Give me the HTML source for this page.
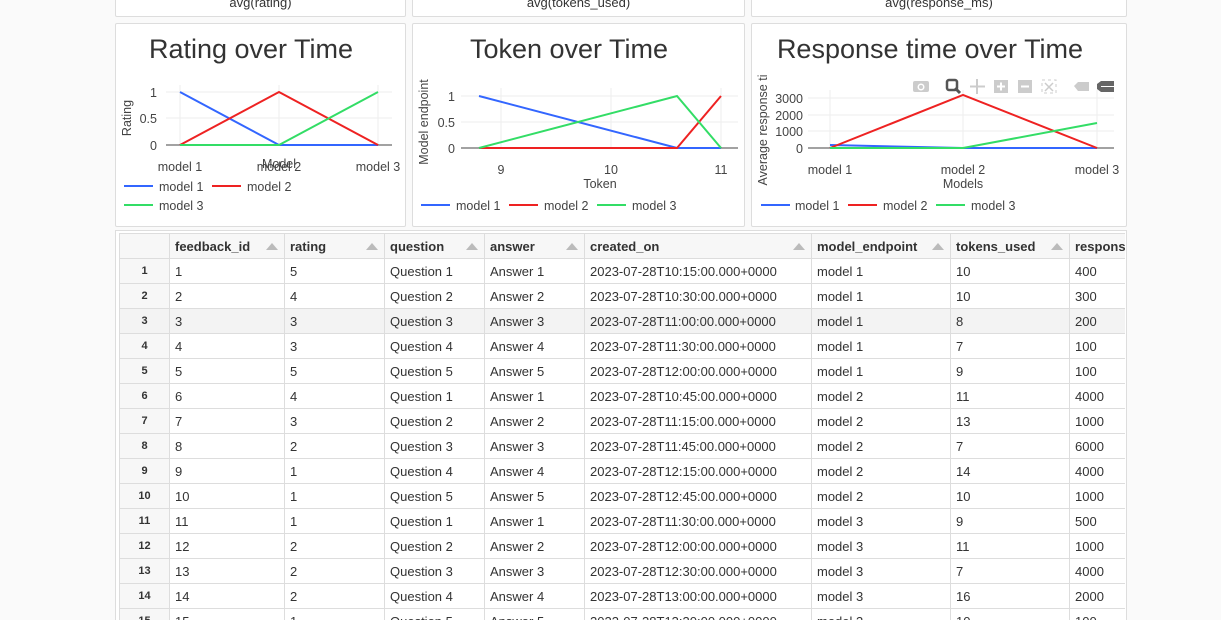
<!DOCTYPE html>
<html><head><meta charset="utf-8"><style>
html,body{margin:0;width:1221px;height:620px;overflow:hidden}
body{background:#fafafa;font-family:"Liberation Sans",sans-serif;position:relative}
.card{position:absolute;background:#fff;border:1px solid #ddd;border-radius:2px;box-sizing:border-box}
.tbl{position:absolute;left:115px;top:230px;width:1012px;height:400px;background:#fff;border:1px solid #ddd;box-sizing:border-box}
.wrap{position:absolute;left:119px;top:233px;width:1006px;height:387px;overflow:hidden}
table{border-collapse:collapse;table-layout:fixed;font-size:13px;color:#333;width:1020px}
td,th{border:1px solid #ddd;height:25px;box-sizing:border-box;padding:0 5px;white-space:nowrap;overflow:hidden;text-align:left}
th{font-weight:bold;background:#f7f7f7;position:relative}
th .ar{position:absolute;right:6px;top:9px;width:0;height:0;border-left:6px solid transparent;border-right:6px solid transparent;border-bottom:7px solid #bbb}
td.n{text-align:center;font-weight:bold;font-size:11px;background:#f7f7f7}
tr.h td{background:#f3f3f3}
.tt{position:absolute;left:0;right:0;top:-1px;text-align:center;font-size:13px;color:#333}
</style></head><body>
<div class="card" style="left:115px;top:-5px;width:291px;height:22px"><div class="tt">avg(rating)</div></div>
<div class="card" style="left:412px;top:-5px;width:333px;height:22px"><div class="tt">avg(tokens_used)</div></div>
<div class="card" style="left:751px;top:-5px;width:376px;height:22px"><div class="tt">avg(response_ms)</div></div>

<div class="card" style="left:115px;top:23px;width:291px;height:204px"></div>
<div class="card" style="left:412px;top:23px;width:333px;height:204px"></div>
<div class="card" style="left:751px;top:23px;width:376px;height:204px"></div>

<svg width="1221" height="230" style="position:absolute;left:0;top:0" font-size="12.5" fill="#444" font-family="Liberation Sans, sans-serif">
<text x="251" y="58" font-size="27" fill="#333" text-anchor="middle">Rating over Time</text>
<g stroke="#eee"><line x1="166" y1="92" x2="392" y2="92"/><line x1="166" y1="118" x2="392" y2="118"/><line x1="180" y1="85" x2="180" y2="145"/><line x1="279" y1="85" x2="279" y2="145"/><line x1="378" y1="85" x2="378" y2="145"/></g>
<line x1="166" y1="145" x2="392" y2="145" stroke="#444"/>
<text x="157" y="97" text-anchor="end">1</text><text x="157" y="123" text-anchor="end">0.5</text><text x="157" y="150" text-anchor="end">0</text>
<text transform="translate(131,118) rotate(-90)" text-anchor="middle">Rating</text>
<g fill="none" stroke-width="2"><polyline points="180,92 279,145 378,145" stroke="#3366ff"/><polyline points="180,145 279,92 378,145" stroke="#ee2222"/><polyline points="180,145 279,145 378,92" stroke="#33dd66"/></g>
<text x="180" y="171" text-anchor="middle">model 1</text><text x="279" y="171" text-anchor="middle">model 2</text><text x="378" y="171" text-anchor="middle">model 3</text>
<text x="279" y="168" text-anchor="middle">Model</text>
<g stroke-width="2"><line x1="124" y1="186" x2="153" y2="186" stroke="#3366ff"/><line x1="212" y1="186" x2="241" y2="186" stroke="#ee2222"/><line x1="124" y1="205" x2="153" y2="205" stroke="#33dd66"/></g>
<text x="159" y="191">model 1</text><text x="247" y="191">model 2</text><text x="159" y="210">model 3</text>
<text x="569" y="58" font-size="27" fill="#333" text-anchor="middle">Token over Time</text>
<g stroke="#eee"><line x1="461" y1="96" x2="738" y2="96"/><line x1="461" y1="122" x2="738" y2="122"/><line x1="501" y1="88" x2="501" y2="148"/><line x1="611" y1="88" x2="611" y2="148"/><line x1="721" y1="88" x2="721" y2="148"/></g>
<line x1="461" y1="148" x2="738" y2="148" stroke="#444"/>
<text x="455" y="101" text-anchor="end">1</text><text x="455" y="127" text-anchor="end">0.5</text><text x="455" y="153" text-anchor="end">0</text>
<text transform="translate(428,122) rotate(-90)" text-anchor="middle">Model endpoint</text>
<g fill="none" stroke-width="2"><polyline points="479,96 677,148 721,148" stroke="#3366ff"/><polyline points="479,148 677,148 721,96" stroke="#ee2222"/><polyline points="479,148 677,96 721,148" stroke="#33dd66"/></g>
<text x="501" y="174" text-anchor="middle">9</text><text x="611" y="174" text-anchor="middle">10</text><text x="721" y="174" text-anchor="middle">11</text>
<text x="600" y="188" text-anchor="middle">Token</text>
<g stroke-width="2"><line x1="421" y1="205" x2="450" y2="205" stroke="#3366ff"/><line x1="509" y1="205" x2="538" y2="205" stroke="#ee2222"/><line x1="597" y1="205" x2="626" y2="205" stroke="#33dd66"/></g>
<text x="456" y="210">model 1</text><text x="544" y="210">model 2</text><text x="632" y="210">model 3</text>
<text x="930" y="58" font-size="27" fill="#333" text-anchor="middle">Response time over Time</text>
<g stroke="#eee"><line x1="808" y1="98" x2="1114" y2="98"/><line x1="808" y1="115" x2="1114" y2="115"/><line x1="808" y1="131" x2="1114" y2="131"/><line x1="830" y1="90" x2="830" y2="148"/><line x1="963" y1="90" x2="963" y2="148"/><line x1="1097" y1="90" x2="1097" y2="148"/></g>
<line x1="808" y1="148" x2="1114" y2="148" stroke="#444"/>
<text x="803" y="103" text-anchor="end">3000</text><text x="803" y="120" text-anchor="end">2000</text><text x="803" y="136" text-anchor="end">1000</text><text x="803" y="153" text-anchor="end">0</text>
<text transform="translate(767,130) rotate(-90)" text-anchor="middle">Average response ti</text>
<g fill="none" stroke-width="2"><polyline points="830,145 963,148 1097,148" stroke="#3366ff"/><polyline points="830,148 963,95 1097,148" stroke="#ee2222"/><polyline points="830,148 963,148 1097,123" stroke="#33dd66"/></g>
<text x="830" y="174" text-anchor="middle">model 1</text><text x="963" y="174" text-anchor="middle">model 2</text><text x="1097" y="174" text-anchor="middle">model 3</text>
<text x="963" y="188" text-anchor="middle">Models</text>
<g stroke-width="2"><line x1="761" y1="205" x2="790" y2="205" stroke="#3366ff"/><line x1="848" y1="205" x2="877" y2="205" stroke="#ee2222"/><line x1="936" y1="205" x2="965" y2="205" stroke="#33dd66"/></g>
<text x="795" y="210">model 1</text><text x="883" y="210">model 2</text><text x="971" y="210">model 3</text>
<g fill="#ccc"><rect x="913" y="81" width="16" height="11" rx="2"/><circle cx="921" cy="87" r="3.5" fill="#fff"/><circle cx="921" cy="87" r="2"/>
<rect x="947" y="80" width="10" height="10" rx="2" fill="none" stroke="#555" stroke-width="2.5"/><line x1="955" y1="88" x2="960" y2="93" stroke="#555" stroke-width="3"/>
<path d="M977 79v15M970 86.5h15" stroke="#ccc" stroke-width="2"/>
<rect x="994" y="80" width="14" height="13"/><path d="M997 86.5h8M1001 82.5v8" stroke="#fff" stroke-width="2"/>
<rect x="1018" y="80" width="14" height="13"/><path d="M1021 86.5h8" stroke="#fff" stroke-width="2"/>
<rect x="1042" y="80" width="14" height="13" fill="none" stroke="#ccc" stroke-dasharray="3 3"/><path d="M1045 83l8 8M1053 83l-8 8" stroke="#ccc" stroke-width="1.5"/>
<path d="M1074 86l4-4h11v9h-11z"/><path d="M1101 81h13v5h-13zM1101 87h13v5h-13zM1097 84l4-3v11l-4-3z" fill="#666"/></g>
</svg>

<div class="tbl"></div>
<div class="wrap">
<table>
<colgroup><col style="width:50px"><col style="width:115px"><col style="width:100px"><col style="width:100px"><col style="width:100px"><col style="width:227px"><col style="width:139px"><col style="width:119px"><col style="width:70px"></colgroup>
<tr><th></th><th>feedback_id<span class="ar"></span></th><th>rating<span class="ar"></span></th><th>question<span class="ar"></span></th><th>answer<span class="ar"></span></th><th>created_on<span class="ar"></span></th><th>model_endpoint<span class="ar"></span></th><th>tokens_used<span class="ar"></span></th><th>response_ms</th></tr>
<tr><td class="n">1</td><td>1</td><td>5</td><td>Question 1</td><td>Answer 1</td><td>2023-07-28T10:15:00.000+0000</td><td>model 1</td><td>10</td><td>400</td></tr>
<tr><td class="n">2</td><td>2</td><td>4</td><td>Question 2</td><td>Answer 2</td><td>2023-07-28T10:30:00.000+0000</td><td>model 1</td><td>10</td><td>300</td></tr>
<tr class="h"><td class="n">3</td><td>3</td><td>3</td><td>Question 3</td><td>Answer 3</td><td>2023-07-28T11:00:00.000+0000</td><td>model 1</td><td>8</td><td>200</td></tr>
<tr><td class="n">4</td><td>4</td><td>3</td><td>Question 4</td><td>Answer 4</td><td>2023-07-28T11:30:00.000+0000</td><td>model 1</td><td>7</td><td>100</td></tr>
<tr><td class="n">5</td><td>5</td><td>5</td><td>Question 5</td><td>Answer 5</td><td>2023-07-28T12:00:00.000+0000</td><td>model 1</td><td>9</td><td>100</td></tr>
<tr><td class="n">6</td><td>6</td><td>4</td><td>Question 1</td><td>Answer 1</td><td>2023-07-28T10:45:00.000+0000</td><td>model 2</td><td>11</td><td>4000</td></tr>
<tr><td class="n">7</td><td>7</td><td>3</td><td>Question 2</td><td>Answer 2</td><td>2023-07-28T11:15:00.000+0000</td><td>model 2</td><td>13</td><td>1000</td></tr>
<tr><td class="n">8</td><td>8</td><td>2</td><td>Question 3</td><td>Answer 3</td><td>2023-07-28T11:45:00.000+0000</td><td>model 2</td><td>7</td><td>6000</td></tr>
<tr><td class="n">9</td><td>9</td><td>1</td><td>Question 4</td><td>Answer 4</td><td>2023-07-28T12:15:00.000+0000</td><td>model 2</td><td>14</td><td>4000</td></tr>
<tr><td class="n">10</td><td>10</td><td>1</td><td>Question 5</td><td>Answer 5</td><td>2023-07-28T12:45:00.000+0000</td><td>model 2</td><td>10</td><td>1000</td></tr>
<tr><td class="n">11</td><td>11</td><td>1</td><td>Question 1</td><td>Answer 1</td><td>2023-07-28T11:30:00.000+0000</td><td>model 3</td><td>9</td><td>500</td></tr>
<tr><td class="n">12</td><td>12</td><td>2</td><td>Question 2</td><td>Answer 2</td><td>2023-07-28T12:00:00.000+0000</td><td>model 3</td><td>11</td><td>1000</td></tr>
<tr><td class="n">13</td><td>13</td><td>2</td><td>Question 3</td><td>Answer 3</td><td>2023-07-28T12:30:00.000+0000</td><td>model 3</td><td>7</td><td>4000</td></tr>
<tr><td class="n">14</td><td>14</td><td>2</td><td>Question 4</td><td>Answer 4</td><td>2023-07-28T13:00:00.000+0000</td><td>model 3</td><td>16</td><td>2000</td></tr>
<tr><td class="n">15</td><td>15</td><td>1</td><td>Question 5</td><td>Answer 5</td><td>2023-07-28T13:30:00.000+0000</td><td>model 3</td><td>10</td><td>100</td></tr>
</table>
</div>
</body></html>
